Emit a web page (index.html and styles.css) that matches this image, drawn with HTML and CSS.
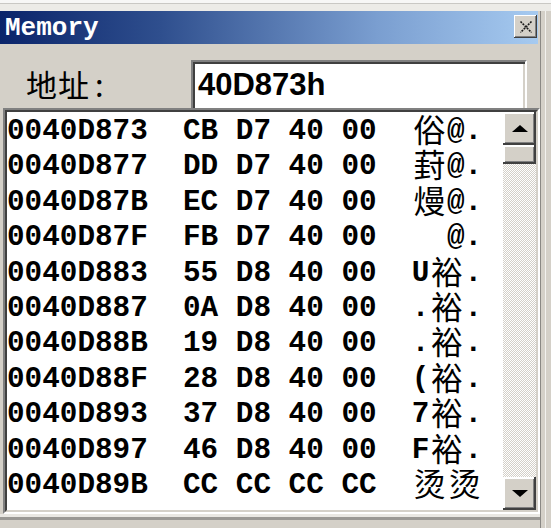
FILE: index.html
```html
<!DOCTYPE html>
<html>
<head>
<meta charset="utf-8">
<title>Memory</title>
<link rel="stylesheet" href="styles.css">
</head>
<body>
<div class="screen">
  <div class="topstrip"></div>
  <div class="main">
    <div class="win">
      <div class="titlebar">
        <span class="title">Memory</span>
        <div class="close">
          <svg width="14" height="14" viewBox="0 0 14 14"><path d="M1.5 1.5 L12.5 12.5 M12.5 1.5 L1.5 12.5" stroke="#1a1a1a" stroke-width="1.6" stroke-dasharray="2 1" fill="none"/></svg>
        </div>
      </div>
      <div class="addr-row">
        <div class="addr-label">地址<span class="colon">:</span></div>
        <div class="addr-input">40D873h</div>
      </div>
      <div class="listbox">
        <div class="listinner">
          <div class="rows">
            <div class="row">0040D873  CB D7 40 00  <span class="cj">俗</span>@.</div>
            <div class="row">0040D877  DD D7 40 00  <span class="cj">葑</span>@.</div>
            <div class="row">0040D87B  EC D7 40 00  <span class="cj">熳</span>@.</div>
            <div class="row">0040D87F  FB D7 40 00    @.</div>
            <div class="row">0040D883  55 D8 40 00  U<span class="cj">裕</span>.</div>
            <div class="row">0040D887  0A D8 40 00  .<span class="cj">裕</span>.</div>
            <div class="row">0040D88B  19 D8 40 00  .<span class="cj">裕</span>.</div>
            <div class="row">0040D88F  28 D8 40 00  (<span class="cj">裕</span>.</div>
            <div class="row">0040D893  37 D8 40 00  7<span class="cj">裕</span>.</div>
            <div class="row">0040D897  46 D8 40 00  F<span class="cj">裕</span>.</div>
            <div class="row">0040D89B  CC CC CC CC  <span class="cj">烫</span><span class="cj">烫</span></div>
          </div>
          <div class="scroll">
            <div class="sbtn"><span class="tri-up"></span></div>
            <div class="thumb"></div>
            <div class="track"></div>
            <div class="sbtn"><span class="tri-down"></span></div>
          </div>
        </div>
      </div>
      <div class="bottomframe"></div>
    </div>
    <div class="rightframe"></div>
  </div>
</div>
</body>
</html>
```

FILE: styles.css
```css
* { box-sizing: border-box; margin: 0; padding: 0; }
html, body { width: 551px; height: 528px; overflow: hidden; background: #d4d0c8; }

.screen { width: 551px; height: 528px; display: flex; flex-direction: column; }

.topstrip {
  height: 11px;
  flex: none;
  background: linear-gradient(#f7f7f6 0 3px, #c9c8c4 3px 4px, #ecebe7 4px);
}

.main { flex: 1; display: flex; min-height: 0; }

.win { width: 540px; display: flex; flex-direction: column; }

.titlebar {
  height: 33px;
  flex: none;
  margin-right: 2px;
  background: linear-gradient(90deg, #0a246a 0%, #2f4f8e 30%, #7a9ed0 70%, #a6caf0 100%);
  display: flex;
  align-items: center;
  justify-content: space-between;
  padding: 0 1px 0 5px;
}

.title {
  color: #fff;
  font: bold 26px/1 "Liberation Mono", monospace;
}

.close {
  width: 23px;
  height: 23px;
  align-self: flex-start;
  margin-top: 4px;
  background: #d4d0c8;
  box-shadow: inset -1px -1px #404040, inset 1px 1px #fff, inset -2px -2px #808080;
  display: flex;
  align-items: center;
  justify-content: center;
}

.addr-row {
  height: 64px;
  flex: none;
  padding-top: 16px;
  display: flex;
}

.addr-label {
  width: 191px;
  padding-left: 26px;
  font: 400 31px/48px "Noto Sans CJK SC", sans-serif;
  letter-spacing: 1px;
  color: #000;
}

.colon { margin-left: 5px; }

.addr-input {
  width: 336px;
  height: 48px;
  background: #fff;
  border-top: 2px solid #808080;
  border-left: 2px solid #808080;
  border-right: 2px solid #fff;
  box-shadow: inset 2px 2px #404040, inset -2px 0 #d4d0c8;
  padding-left: 5px;
  font: bold 31px/46px "Liberation Sans", sans-serif;
  color: #000;
}

.listbox {
  height: 406px;
  flex: none;
  margin-left: 3px;
  border-top: 2px solid #808080;
  border-left: 2px solid #808080;
  border-right: 2px solid #fff;
  border-bottom: 2px solid #fff;
}

.listinner {
  height: 100%;
  display: flex;
  background: #fff;
  border-top: 2px solid #404040;
  border-left: 2px solid #404040;
  border-right: 2px solid #d4d0c8;
  border-bottom: 2px solid #d4d0c8;
}

.rows {
  flex: 1;
  overflow: hidden;
  padding-top: 2px;
  font: bold 29.33px/35.4px "Liberation Mono", monospace;
  color: #000;
}

.row { height: 35.4px; white-space: pre; }

.cj {
  display: inline-block;
  width: 35.2px;
  text-align: center;
  font: 400 32px/0 "Noto Sans CJK SC", sans-serif;
  vertical-align: -3px;
}

.scroll {
  width: 33px;
  display: flex;
  flex-direction: column;
  background: repeating-conic-gradient(#ffffff 0 25%, #d4d0c8 0 50%) 0 0 / 2px 2px;
}

.sbtn, .thumb {
  background: #d4d0c8;
  box-shadow: inset -2px -2px #404040, inset 2px 2px #fff, inset -3px -3px #808080;
}

.sbtn {
  height: 33px;
  display: flex;
  align-items: center;
  justify-content: center;
}

.thumb { height: 19px; }
.track { flex: 1; }

.tri-up {
  width: 0; height: 0;
  border-left: 8px solid transparent;
  border-right: 8px solid transparent;
  border-bottom: 7px solid #000;
}

.tri-down {
  width: 0; height: 0;
  border-left: 8px solid transparent;
  border-right: 8px solid transparent;
  border-top: 7px solid #000;
}

.bottomframe {
  flex: 1;
  background: linear-gradient(#e9e7e2 0 3px, #9a9894 3px 6px, #d4d0c8 6px);
}

.rightframe {
  flex: 1;
  background: linear-gradient(90deg, #8a8884 0 1px, #d4d0c8 1px 5px, #f2f1ee 5px 6px, #d4d0c8 6px);
}
```
